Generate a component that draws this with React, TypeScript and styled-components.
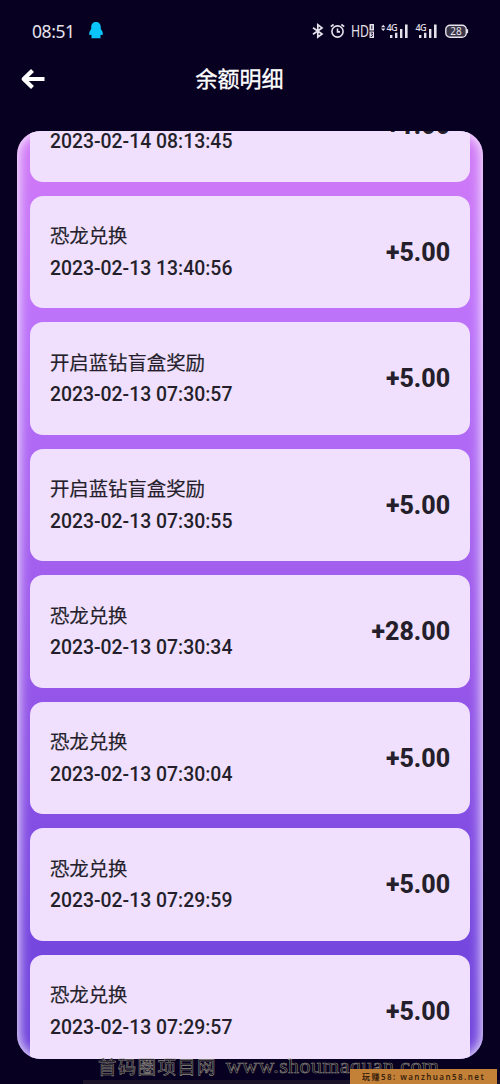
import React from 'react';
import styled, { createGlobalStyle } from 'styled-components';

const GlobalStyle = createGlobalStyle`
  * { box-sizing: border-box; }
  body { margin: 0; background: #080020; }
`;

const Screen = styled.div`
  position: relative;
  width: 500px;
  height: 1084px;
  overflow: hidden;
  display: flex;
  flex-direction: column;
  background: #080020;
  font-family: Roboto, 'Noto Sans CJK SC', sans-serif;
`;

const StatusBar = styled.div`
  display: flex;
  align-items: center;
  height: 61px;
  padding: 0 31px 0 32px;
  color: #e6e2ec;
`;

const Clock = styled.span`
  width: 57px;
  font-family: 'Noto Sans', sans-serif;
  font-size: 17.5px;
  line-height: 24px;
  letter-spacing: -0.4px;
`;

const StatusIcons = styled.div`
  display: flex;
  align-items: center;
  margin-left: auto;
`;

const Glyph = styled.svg<{ $gap?: number }>`
  display: block;
  flex: none;
  margin-left: ${({ $gap = 0 }) => $gap}px;
  overflow: visible;
`;

const Header = styled.header`
  display: grid;
  grid-template-columns: 60px 1fr 101px;
  align-items: center;
  height: 36px;
  padding-left: 20px;
  color: #fff;
`;

const Title = styled.h1`
  margin: 0;
  padding-top: 1px;
  text-align: center;
  font-size: 22px;
  line-height: 32px;
  font-weight: 400;
  -webkit-text-stroke: 0.35px currentColor;
`;

const Panel = styled.main`
  position: relative;
  height: 928.5px;
  margin: 33.5px 17px 0;
  padding: 0 13.4px;
  border-radius: 24px;
  overflow: hidden;
  background: linear-gradient(180deg, #d27af6 0%, #bd72fa 20%, #9858ea 58%, #7848e0 85%, #7044dc 100%);
  box-shadow: inset 0 0 12px 2px rgba(255, 255, 255, 0.85);
`;

const List = styled.div`
  display: flex;
  flex-direction: column;
  gap: 14px;
  margin-top: -61.1px;
`;

const Card = styled.section`
  display: flex;
  flex: none;
  align-items: center;
  justify-content: space-between;
  height: 112.5px;
  padding: 0 19.5px;
  border-radius: 13px;
  background: #f0e0fe;
  color: #241f2a;
`;

const Details = styled.div`
  display: flex;
  flex-direction: column;
  padding-top: 1px;
  font-size: 19.4px;
  line-height: 31.5px;
`;

const Reason = styled.span`
  font-weight: 400;
  -webkit-text-stroke: 0.2px currentColor;
`;

const Time = styled.time`
  font-weight: 500;
`;

const Amount = styled.strong`
  padding-top: 1px;
  font-size: 25px;
  line-height: 32px;
  font-weight: 800;
`;

const BottomStrip = styled.div`
  width: 417px;
  height: 4px;
  margin: 21px 0 0 83px;
  background: #1b1429;
`;

const SiteMark = styled.div`
  position: absolute;
  left: 98px;
  top: 1052px;
  display: flex;
  align-items: center;
  gap: 9px;
  height: 28px;
  white-space: nowrap;
  color: #080510;
  -webkit-text-stroke: 0.6px #8a8780;
`;

const MarkName = styled.span`
  font: 400 18.5px/28px 'Noto Sans CJK SC', sans-serif;
  letter-spacing: 1.3px;
`;

const MarkUrl = styled.span`
  font: 400 22px/28px 'Liberation Serif', serif;
  letter-spacing: 0.4px;
`;

const SiteTag = styled.div`
  position: absolute;
  left: 350px;
  top: 1069px;
  width: 147px;
  height: 15px;
  padding-left: 12px;
  background: #c38137;
  color: #3a220c;
  font: 600 8px/15px 'Noto Sans', 'Noto Sans CJK SC', sans-serif;
  letter-spacing: 1.45px;
  white-space: nowrap;
`;

const records = [
  { reason: '恐龙兑换', time: '2023-02-14 08:13:45', amount: '+1.00' },
  { reason: '恐龙兑换', time: '2023-02-13 13:40:56', amount: '+5.00' },
  { reason: '开启蓝钻盲盒奖励', time: '2023-02-13 07:30:57', amount: '+5.00' },
  { reason: '开启蓝钻盲盒奖励', time: '2023-02-13 07:30:55', amount: '+5.00' },
  { reason: '恐龙兑换', time: '2023-02-13 07:30:34', amount: '+28.00' },
  { reason: '恐龙兑换', time: '2023-02-13 07:30:04', amount: '+5.00' },
  { reason: '恐龙兑换', time: '2023-02-13 07:29:59', amount: '+5.00' },
  { reason: '恐龙兑换', time: '2023-02-13 07:29:57', amount: '+5.00' },
];

const glyphFont = { fontFamily: "'Noto Sans', sans-serif" };

function Signal({ arrows, gap }: { arrows?: boolean; gap: number }) {
  const width = arrows ? 27 : 21;
  const x = width - 21;
  return (
    <Glyph $gap={gap} width={width} height="16" viewBox={`0 0 ${width} 16`} fill="currentColor">
      {arrows && <path d="M0 4.2 2.2 1.8 4.4 4.2ZM0 5.6 2.2 8 4.4 5.6Z" />}
      <text x={x - 0.5} y="7.8" fontSize="9" fontWeight="500" style={glyphFont} textLength="11">4G</text>
      <path d={`M${x + 3} 12h2.4v3h-2.4zM${x + 8} 9.8h2.4V15H${x + 8}zM${x + 13} 6h2.4v9h-2.4zM${x + 18} 1.5h2.6V15h-2.6z`} />
    </Glyph>
  );
}

export default function App() {
  return (
    <Screen>
      <GlobalStyle />
      <StatusBar>
        <Clock>08:51</Clock>
        <Glyph width="14" height="17" viewBox="0 0 14 17" fill="#0bc5fa">
          <path d="M7 0C4 0 2.2 2.1 2.2 5v2.1C1 8.6 0 10.4.2 12.4c.4.8 1.2.6 1.9 0 .1.7.3 1 .6 1.5-.3.4-.3 1-.2 2.3h9c.1-1.3.1-1.9-.2-2.3.3-.5.5-.8.6-1.5.7.6 1.5.8 1.9 0 .2-2-.8-3.8-2-5.3V5C11.8 2.1 10 0 7 0Z" />
        </Glyph>
        <StatusIcons>
          <Glyph width="12" height="16" viewBox="0 0 12 16" fill="none" stroke="currentColor" strokeWidth="1.7">
            <path d="M1 4.7 10 11 5.8 14V1.8L10 4.9 1 11.2" />
          </Glyph>
          <Glyph $gap={6} width="15" height="16" viewBox="0 0 15 16" fill="none" stroke="currentColor" strokeWidth="1.6">
            <circle cx="7.5" cy="8.5" r="5.6" />
            <path d="M7.5 5.4v3.5H10M.8 3.7 3.6 1.5M14.2 3.7l-2.8-2.2" />
          </Glyph>
          <Glyph $gap={6} width="24" height="16" viewBox="0 0 24 16" fill="currentColor">
            <text x="0" y="13.9" fontSize="16" textLength="18" lengthAdjust="spacingAndGlyphs" style={glyphFont}>HD</text>
            <path d="M18.5 1H23v6.5h-4.5zM18.5 8.5H23V15h-4.5z" />
            <path d="M20.8 2.4v3.7M19.7 10h2l-1 1.4 1 .8-.7 1.2h-1.3" fill="none" stroke="#080020" strokeWidth=".9" />
          </Glyph>
          <Signal gap={6} arrows />
          <Signal gap={8} />
          <Glyph $gap={8} width="24" height="16" viewBox="0 0 24 16">
            <rect x=".8" y="2.2" width="20.5" height="12" rx="4.3" fill="#3b3549" stroke="currentColor" strokeWidth="1.4" />
            <path d="M22.3 6.2v4" stroke="currentColor" strokeWidth="1.6" />
            <text x="5.2" y="11.7" fontSize="10" fill="currentColor" style={glyphFont}>28</text>
          </Glyph>
        </StatusIcons>
      </StatusBar>
      <Header>
        <Glyph width="26" height="22" viewBox="0 0 26 22" fill="none" stroke="currentColor" strokeWidth="4.2" strokeLinejoin="round">
          <path d="M12.5 2.5 3.7 11l8.8 8.5M4 11h20.5" />
        </Glyph>
        <Title>余额明细</Title>
      </Header>
      <Panel>
        <List>
          {records.map((record) => (
            <Card key={record.time}>
              <Details>
                <Reason>{record.reason}</Reason>
                <Time>{record.time}</Time>
              </Details>
              <Amount>{record.amount}</Amount>
            </Card>
          ))}
        </List>
      </Panel>
      <BottomStrip />
      <SiteMark>
        <MarkName>首码圈项目网</MarkName>
        <MarkUrl>www.shoumaquan.com</MarkUrl>
      </SiteMark>
      <SiteTag>玩赚58: wanzhuan58.net</SiteTag>
    </Screen>
  );
}
